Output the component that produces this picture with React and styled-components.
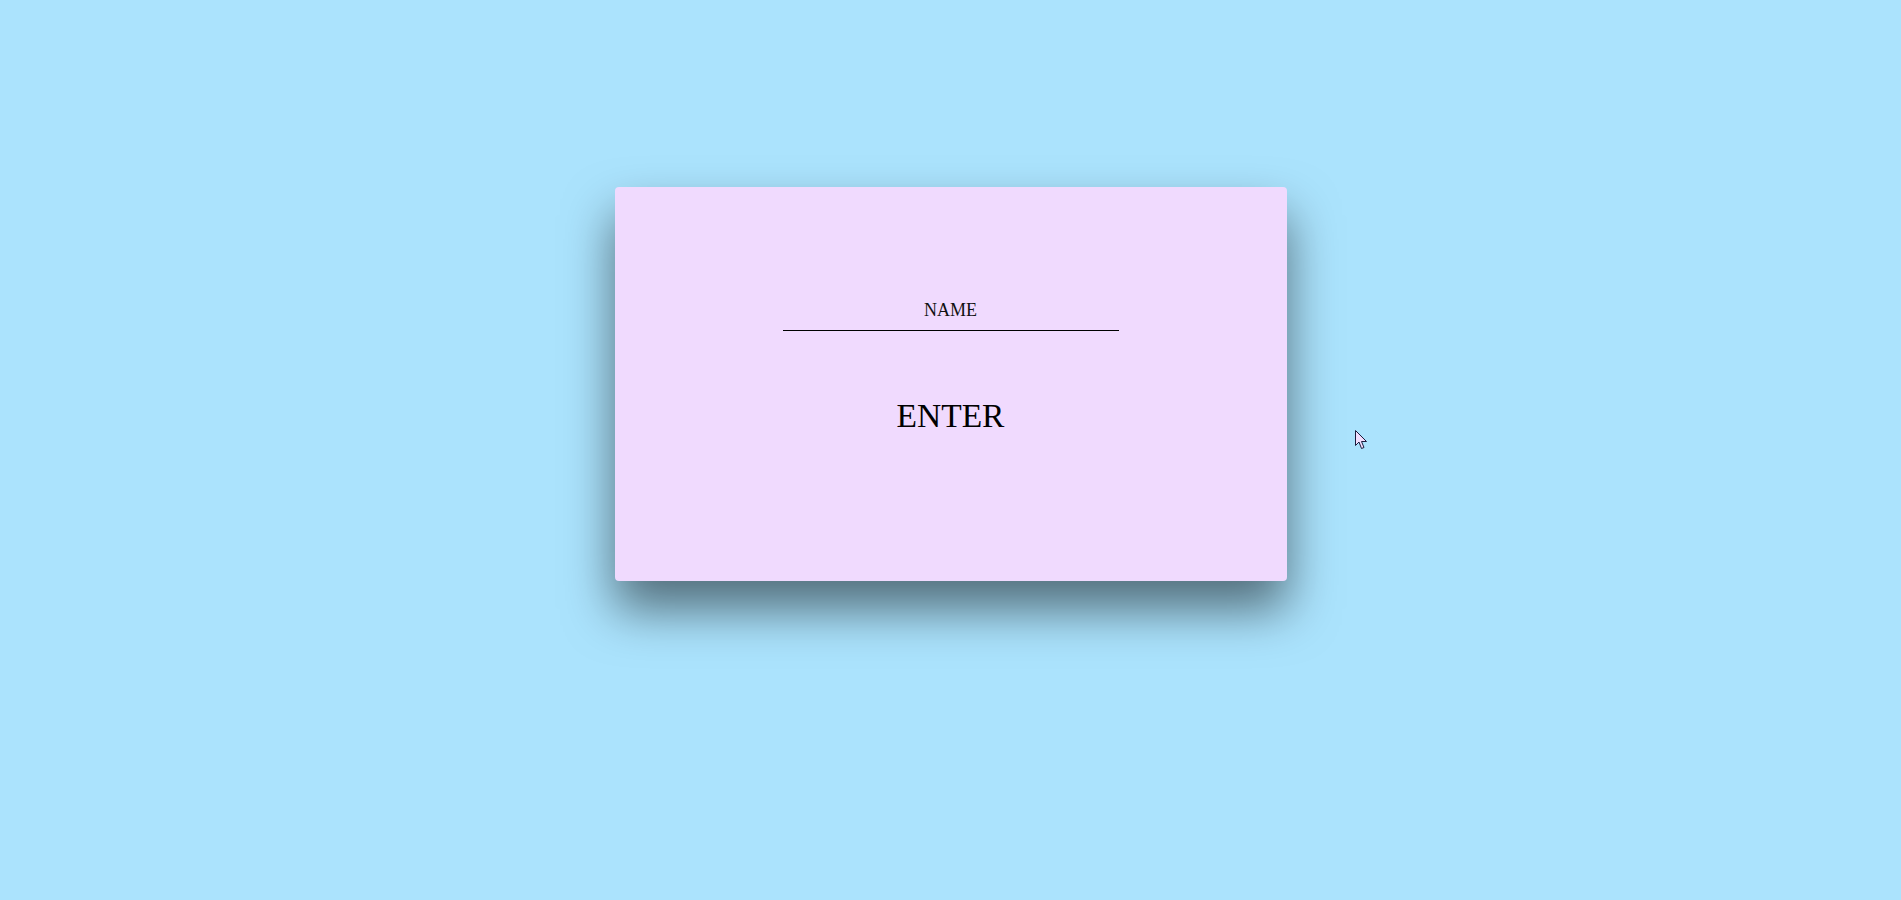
import styled, { createGlobalStyle } from 'styled-components'

const GlobalStyle = createGlobalStyle`
  html, body {
    margin: 0;
    padding: 0;
    background: #abe3fd;
  }

  body {
    min-height: 900px;
    font-family: "Liberation Serif", "Times New Roman", serif;
    color: #000;
  }
`

const Page = styled.main`
  position: relative;
  min-height: 900px;
  padding-top: 187px;
  box-sizing: border-box;
`

const Card = styled.form`
  width: 672px;
  height: 394px;
  margin: 0 auto;
  padding-top: 113px;
  box-sizing: border-box;
  display: flex;
  flex-direction: column;
  align-items: center;
  background: #f0dafe;
  border-radius: 4px;
  box-shadow: 0 28px 50px rgba(0, 0, 0, 0.52);
`

const NameInput = styled.input`
  display: block;
  width: 336px;
  margin: 0;
  padding: 0 0 9px;
  border: none;
  border-bottom: 1px solid #000;
  background: transparent;
  outline: none;
  font-family: inherit;
  font-size: 18px;
  line-height: 21px;
  text-align: center;
  color: #000;

  &::placeholder {
    color: #111;
    opacity: 1;
  }
`

const EnterButton = styled.button`
  margin-top: 66px;
  padding: 0;
  border: none;
  background: none;
  font-family: inherit;
  font-size: 33.5px;
  line-height: normal;
  color: #000;
  cursor: pointer;
`

const Pointer = styled.svg`
  position: absolute;
  left: 1355px;
  top: 430px;
  width: 13px;
  height: 20px;
  pointer-events: none;
`

export default function App() {
  return (
    <>
      <GlobalStyle />
      <Page>
        <Card onSubmit={e => e.preventDefault()}>
          <NameInput type='text' placeholder='NAME' />
          <EnterButton type='submit'>ENTER</EnterButton>
        </Card>
        <Pointer viewBox='0 0 13 20'>
          <path
            d='M0.5 0.5 L0.5 15.5 L4 12 L6.5 18.5 L9 17.5 L6.5 11.5 L11.5 11.5 Z'
            fill='#f2defe'
            stroke='#1c1c3c'
            strokeWidth='1'
            strokeLinejoin='miter'
          />
        </Pointer>
      </Page>
    </>
  )
}
